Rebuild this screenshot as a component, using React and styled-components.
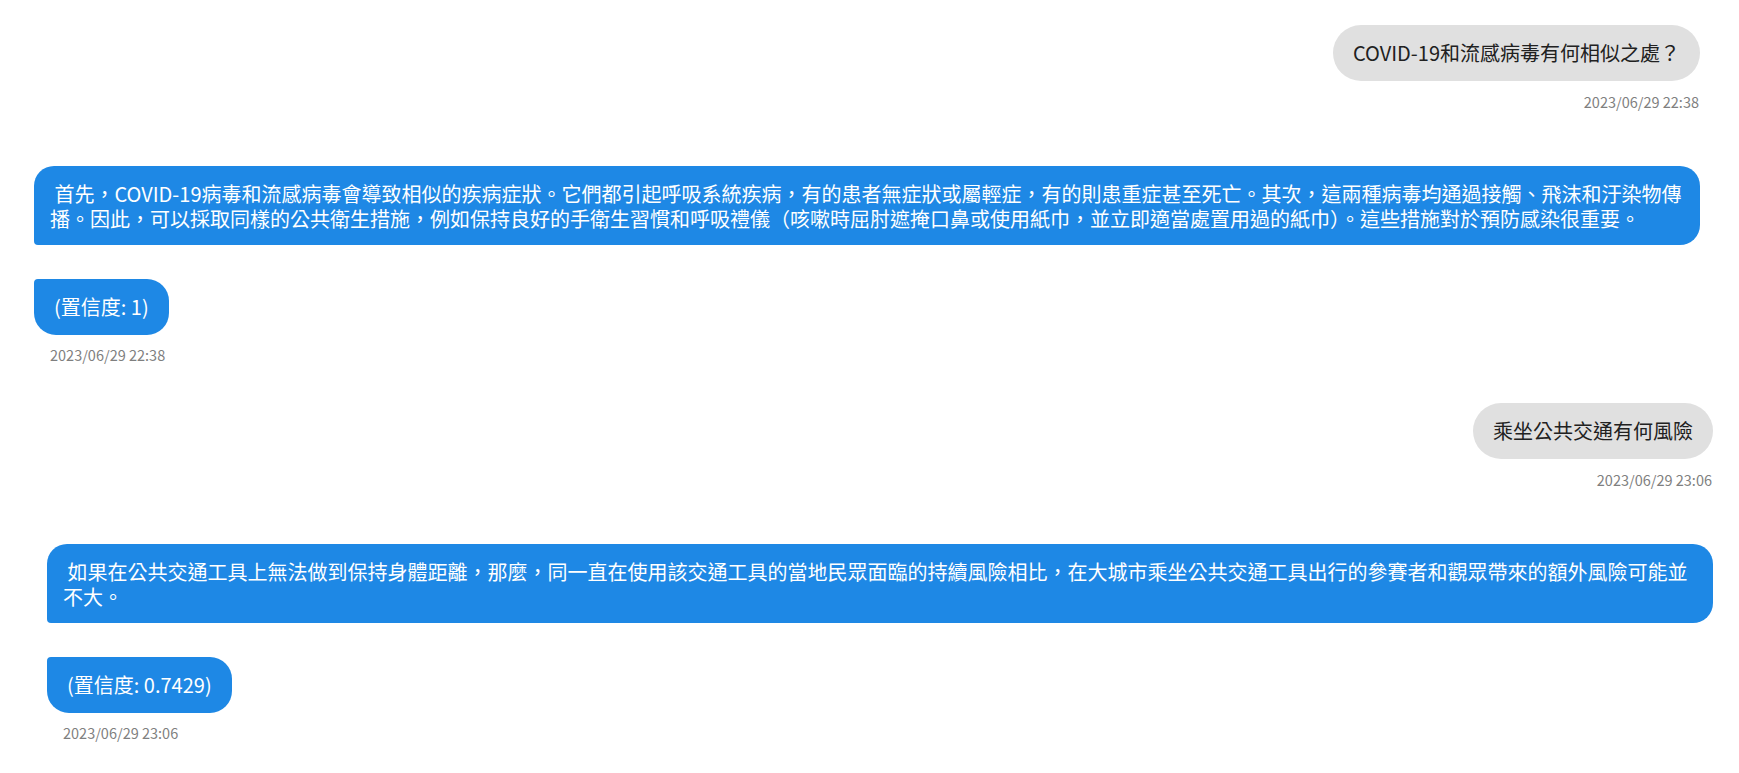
import React from 'react';
import styled, { createGlobalStyle } from 'styled-components';

const GlobalStyle = createGlobalStyle`
  body {
    margin: 0;
    background: #ffffff;
    font-family: "Noto Sans CJK TC", "Noto Sans", sans-serif;
  }
`;

const exchanges = [
  {
    question: 'COVID-19和流感病毒有何相似之處？',
    askedAt: '2023/06/29 22:38',
    answer:
      ' 首先，COVID-19病毒和流感病毒會導致相似的疾病症狀。它們都引起呼吸系統疾病，有的患者無症狀或屬輕症，有的則患重症甚至死亡。其次，這兩種病毒均通過接觸、飛沫和汙染物傳播。因此，可以採取同樣的公共衛生措施，例如保持良好的手衛生習慣和呼吸禮儀（咳嗽時屈肘遮掩口鼻或使用紙巾，並立即適當處置用過的紙巾）。這些措施對於預防感染很重要。',
    confidence: '1',
    answeredAt: '2023/06/29 22:38',
    left: 34,
    right: 39,
  },
  {
    question: '乘坐公共交通有何風險',
    askedAt: '2023/06/29 23:06',
    answer:
      ' 如果在公共交通工具上無法做到保持身體距離，那麼，同一直在使用該交通工具的當地民眾面臨的持續風險相比，在大城市乘坐公共交通工具出行的參賽者和觀眾帶來的額外風險可能並不大。',
    confidence: '0.7429',
    answeredAt: '2023/06/29 23:06',
    left: 47,
    right: 26,
  },
];

const Chat = styled.main`
  display: flex;
  flex-direction: column;
  padding-top: 25px;
`;

const Exchange = styled.section`
  display: flex;
  flex-direction: column;
  padding: 0 ${(p) => p.$right}px 0 ${(p) => p.$left}px;
`;

const UserBlock = styled.div`
  display: flex;
  flex-direction: column;
  align-items: flex-end;
  margin-bottom: 54px;
`;

const BotBlock = styled.div`
  display: flex;
  flex-direction: column;
  align-items: flex-start;
  margin-bottom: 38px;
`;

const UserBubble = styled.div`
  background: #e0e0e0;
  color: #212121;
  font-size: 20px;
  line-height: 26px;
  padding: 15px 20px;
  border-radius: 28px;
`;

const BotBubble = styled.div`
  align-self: stretch;
  background: #1e88e5;
  color: #ffffff;
  font-size: 20px;
  line-height: 25px;
  padding: 15px 16px 14px;
  border-radius: 20px 20px 20px 4px;
  white-space: pre-wrap;
`;

const Confidence = styled.div`
  margin-top: 34px;
  background: #1e88e5;
  color: #ffffff;
  font-size: 20px;
  line-height: 26px;
  padding: 15px 20px;
  border-radius: 4px 22px 22px 22px;
`;

const Time = styled.div`
  margin-top: ${(p) => (p.$side === 'right' ? '11px' : '10px')};
  font-size: 14.5px;
  line-height: 20px;
  color: #7f7f7f;
  padding: ${(p) => (p.$side === 'right' ? '0 1px 0 0' : '0 0 0 16px')};
`;

export default function App() {
  return (
    <>
      <GlobalStyle />
      <Chat>
        {exchanges.map((ex) => (
          <Exchange key={ex.askedAt + ex.question} $left={ex.left} $right={ex.right}>
            <UserBlock>
              <UserBubble>{ex.question}</UserBubble>
              <Time $side="right">{ex.askedAt}</Time>
            </UserBlock>
            <BotBlock>
              <BotBubble>{ex.answer}</BotBubble>
              <Confidence>(置信度: {ex.confidence})</Confidence>
              <Time $side="left">{ex.answeredAt}</Time>
            </BotBlock>
          </Exchange>
        ))}
      </Chat>
    </>
  );
}
